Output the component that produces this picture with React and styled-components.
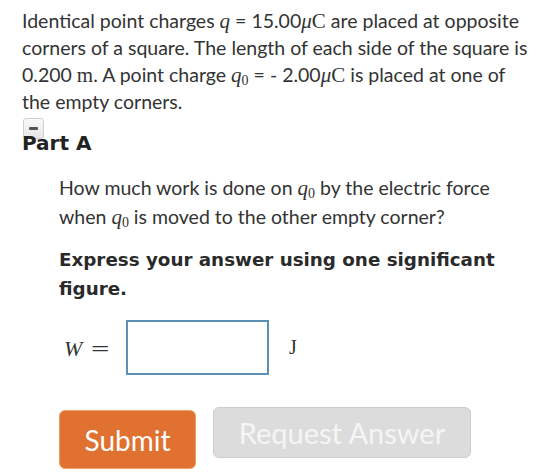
import React from 'react';
import styled, { createGlobalStyle } from 'styled-components';

const GlobalStyle = createGlobalStyle`
  html, body {
    margin: 0;
    padding: 0;
    background: #ffffff;
  }
  body {
    font-family: Lato, "Open Sans", sans-serif;
    color: #333333;
  }
`;

const Page = styled.div`
  width: 560px;
  padding: 7px 28px 0 22px;
  box-sizing: border-box;
`;

const Intro = styled.p`
  margin: 0;
  font-size: 19.5px;
  line-height: 27px;
`;

// inline math: serif italics for symbols, upright serif for units
const Var = styled.i`
  font-family: "Liberation Serif", "DejaVu Serif", serif;
  font-style: italic;
  font-size: 21px;
  line-height: 0;
`;

const Unit = styled.span`
  font-family: "Liberation Serif", "DejaVu Serif", serif;
  font-style: ${p => (p.$italic ? 'italic' : 'normal')};
  font-size: 21px;
  line-height: 0;
`;

const Sub = styled.sub`
  font-family: "Liberation Serif", "DejaVu Serif", serif;
  font-style: normal;
  font-size: 14px;
  vertical-align: -3px;
  line-height: 0;
`;

const PartHeader = styled.div`
  position: relative;
  margin-top: 3px;
`;

const Toggle = styled.span`
  position: absolute;
  left: 1px;
  top: 0;
  width: 19px;
  height: 19px;
  border: 1px solid #cfcfcf;
  border-radius: 3px;
  background: linear-gradient(#fafafa, #e6e6e6);
  &::after {
    content: '';
    position: absolute;
    left: 5px;
    top: 8px;
    width: 9px;
    height: 3px;
    border-radius: 1px;
    background: #555;
  }
`;

const PartTitle = styled.h2`
  position: relative;
  margin: 0;
  padding-top: 13px;
  font-family: "DejaVu Sans", Lato, sans-serif;
  font-size: 20px;
  line-height: 25px;
  font-weight: 700;
  color: #222;
`;

const PartBody = styled.div`
  padding-left: 37px;
  padding-top: 17px;
`;

const Question = styled.p`
  margin: 0;
  font-size: 19.5px;
  line-height: 29px;
`;

const Instruction = styled.p`
  margin: 14px 0 0;
  font-family: "DejaVu Sans", Lato, sans-serif;
  font-size: 18.3px;
  line-height: 29px;
  font-weight: 700;
  color: #2a2a2a;
`;

const AnswerRow = styled.div`
  display: flex;
  align-items: center;
  margin-top: 17px;
  padding-left: 5px;
`;

const Label = styled.span`
  display: flex;
  align-items: baseline;
  width: 62px;
  font-family: "Liberation Serif", "DejaVu Serif", serif;
  font-size: 22px;
  color: #333;
  & i {
    font-style: italic;
  }
`;

const Equals = styled.span`
  display: inline-block;
  font-family: Lato, sans-serif;
  font-size: 22px;
  margin-left: 8px;
  transform: scaleX(1.6);
  transform-origin: left center;
`;

const AnswerBox = styled.input`
  width: 143px;
  height: 55px;
  box-sizing: border-box;
  border: 2px solid #5d8fb4;
  background: #fff;
  outline: none;
  margin: 0;
`;

const UnitLabel = styled.span`
  font-family: "Liberation Serif", "DejaVu Serif", serif;
  font-size: 20px;
  margin-left: 20px;
  color: #333;
`;

const ButtonRow = styled.div`
  display: flex;
  align-items: flex-start;
  gap: 17px;
  margin-top: 32px;
`;

const Button = styled.button`
  font-family: Lato, "Open Sans", sans-serif;
  font-size: 28px;
  border-radius: 6px;
  cursor: pointer;
  padding: 0;
  box-sizing: border-box;
`;

const SubmitButton = styled(Button)`
  margin-top: 3px;
  width: 137px;
  height: 59px;
  background: #e07130;
  border: 1px solid #eea066;
  color: #ffffff;
`;

const RequestButton = styled(Button)`
  width: 258px;
  height: 51px;
  font-size: 29px;
  background: #dcdcdc;
  border: 1px solid #cdcdcd;
  color: #f5f5f5;
`;

export default function App() {
  return (
    <>
      <GlobalStyle />
      <Page>
        <Intro>
          Identical point charges <Var>q</Var> = 15.00<Unit $italic>μ</Unit>
          <Unit>C</Unit> are placed at opposite corners of a square. The length
          of each side of the square is 0.200 <Unit>m</Unit>. A point charge{' '}
          <Var>q</Var>
          <Sub>0</Sub> = - 2.00<Unit $italic>μ</Unit>
          <Unit>C</Unit> is placed at one of the empty corners.
        </Intro>

        <PartHeader>
          <Toggle />
          <PartTitle>Part A</PartTitle>
        </PartHeader>

        <PartBody>
          <Question>
            How much work is done on <Var>q</Var>
            <Sub>0</Sub> by the electric force when <Var>q</Var>
            <Sub>0</Sub> is moved to the other empty corner?
          </Question>
          <Instruction>Express your answer using one significant figure.</Instruction>

          <AnswerRow>
            <Label>
              <i>W</i>
              <Equals>=</Equals>
            </Label>
            <AnswerBox type="text" aria-label="W" />
            <UnitLabel>J</UnitLabel>
          </AnswerRow>

          <ButtonRow>
            <SubmitButton>Submit</SubmitButton>
            <RequestButton>Request Answer</RequestButton>
          </ButtonRow>
        </PartBody>
      </Page>
    </>
  );
}
